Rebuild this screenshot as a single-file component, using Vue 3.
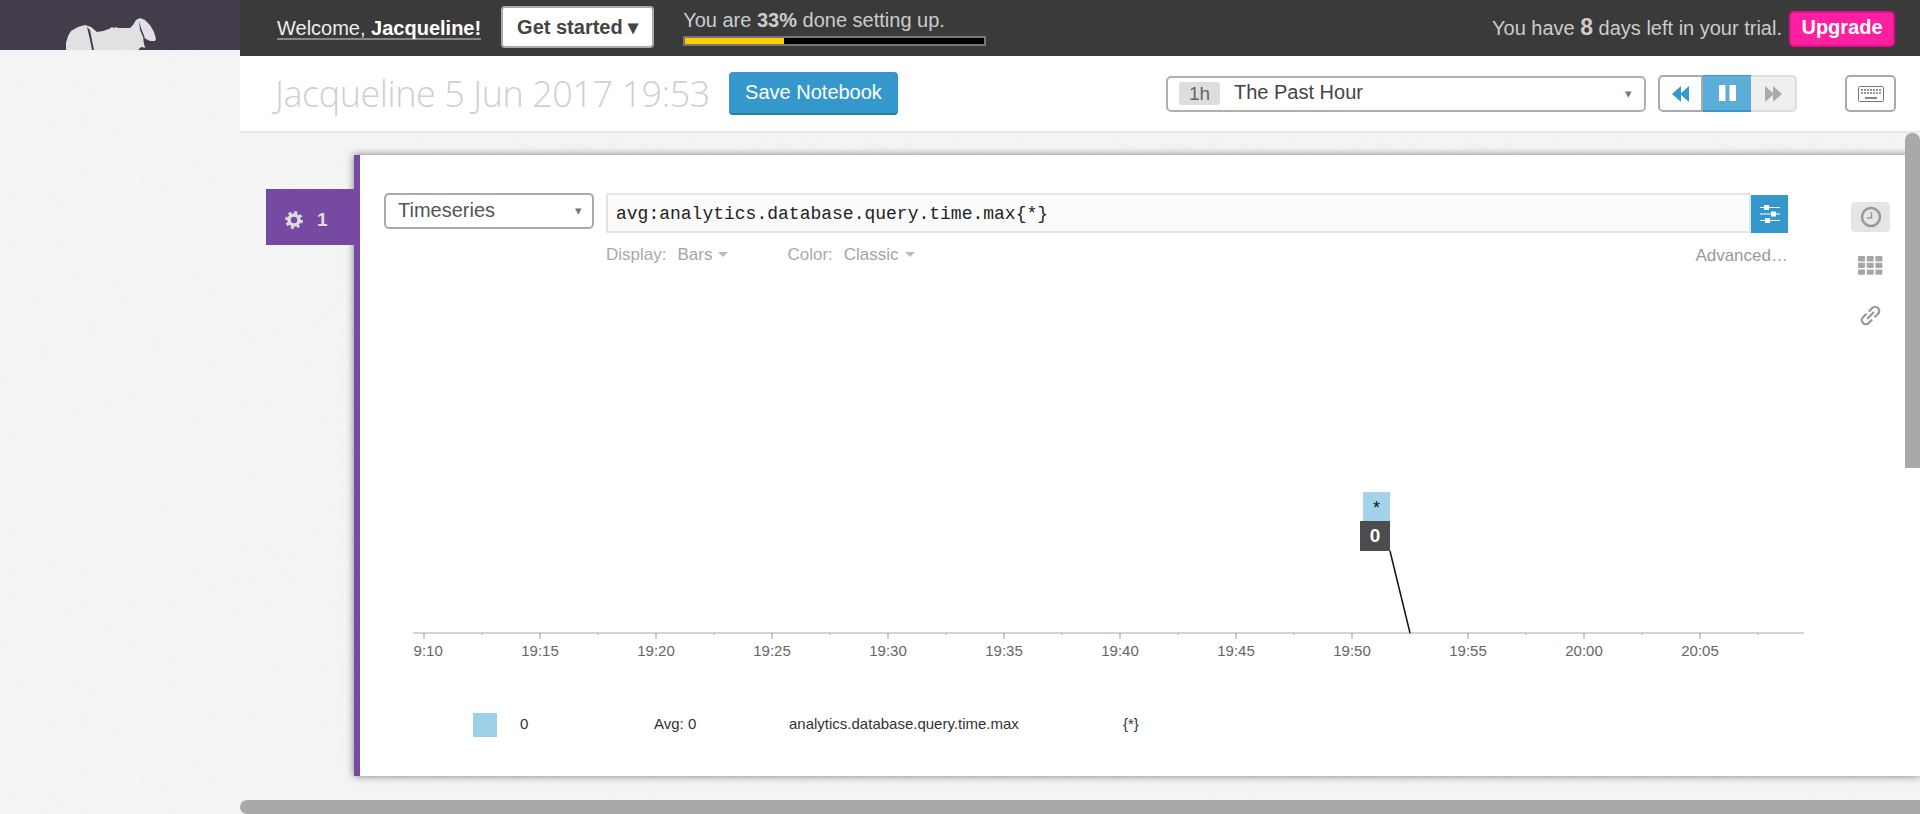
<template>
  <div class="page">
    <aside class="side">
      <div class="logo">
        <svg width="240" height="50" viewBox="0 0 240 50">
          <path fill="#e1e1e3" d="M66 50L66 43L68 36L71 31L78 27L85 25L91 27L97 32L103 31L109 29L112 27L114 28L116 27L118 28L130 28L133 25L136 20L140 18L145 20L150 25L154 32L156 39L155 41L150 41L146 39L143 37L144 44L146 50Z" />
          <path fill="#443c4a" d="M87 27L90 30L92 40L94 50L92 50L90 40Z" />
          <path fill="#443c4a" d="M139 21L141 28L145 38L143 37L140 30Z" />
          <path fill="#443c4a" d="M138 50L141 47L146 48L146 50Z" />
        </svg>
      </div>
    </aside>

    <div class="main">
      <header class="topbar">
        <a class="welcome">Welcome, <b>Jacqueline!</b></a>
        <button class="started">Get started ▾</button>
        <div class="setup">
          <div class="setup-text">You are <b>33%</b> done setting up.</div>
          <div class="progress"><div class="progress-fill" :style="{ width: done + '%' }"></div></div>
        </div>
        <div class="trial">You have <b class="days">8</b> days left in your trial.</div>
        <button class="upgrade">Upgrade</button>
      </header>

      <div class="titlebar">
        <h1 class="title">Jacqueline 5 Jun 2017 19:53</h1>
        <button class="save">Save Notebook</button>
        <div class="timepicker">
          <span class="range">1h</span>
          <span class="range-label">The Past Hour</span>
          <span class="small-caret">▾</span>
        </div>
        <div class="playback">
          <button class="play-btn back">
            <svg width="17" height="16" viewBox="0 0 17 16"><path fill="#3498cc" d="M9 0V16L0 8ZM17 0V16L8 8Z" /></svg>
          </button>
          <button class="play-btn pause">
            <svg width="17" height="16" viewBox="0 0 17 16"><path fill="#fff" d="M0 0H6.5V16H0ZM10.5 0H17V16H10.5Z" /></svg>
          </button>
          <button class="play-btn forward">
            <svg width="17" height="16" viewBox="0 0 17 16"><path fill="#aaa" d="M0 0L9 8L0 16ZM8 0L17 8L8 16Z" /></svg>
          </button>
        </div>
        <button class="keys">
          <svg width="26" height="16" viewBox="0 0 26 16">
            <rect x="0.5" y="0.5" width="25" height="15" rx="1" fill="#fff" stroke="#777" />
            <path stroke="#999" stroke-width="2" stroke-dasharray="2 1" d="M3 4H23M3 7H23" />
            <path stroke="#888" stroke-width="2" d="M7 12H19" />
          </svg>
        </button>
      </div>

      <div class="notebook">
        <div class="tab">
          <svg width="18" height="18" viewBox="0 0 18 18">
            <circle cx="9" cy="9" r="5" fill="none" stroke="#ddd" stroke-width="3.6" />
            <circle cx="9" cy="9" r="7.6" fill="none" stroke="#ddd" stroke-width="2.6" stroke-dasharray="3 2.97" />
          </svg>
          <span>1</span>
        </div>
        <section class="card">
          <div class="editor">
            <div class="type-select">
              <span>Timeseries</span>
              <span class="small-caret">▾</span>
            </div>
            <div class="query">
              <div class="query-row">
                <div class="query-input">avg:analytics.database.query.time.max{*}</div>
                <button class="tune">
                  <svg width="20" height="20" viewBox="0 0 20 20" fill="#fff">
                    <path d="M0 3H20V4H0ZM0 9.500H20V10.500H0ZM0 16H20V17H0Z" />
                    <path d="M4 1H9V6H4ZM11 7.500H16V12.500H11ZM5 14H10V19H5Z" />
                  </svg>
                </button>
              </div>
              <div class="options">
                <span class="opt-label">Display:</span>
                <span class="opt-value">Bars</span>
                <span class="opt-caret"></span>
                <span class="opt-label second">Color:</span>
                <span class="opt-value">Classic</span>
                <span class="opt-caret"></span>
                <span class="advanced">Advanced…</span>
              </div>
            </div>
            <div class="rail">
              <div class="rail-item active">
                <svg width="22" height="22" viewBox="0 0 22 22" fill="none" stroke="#999">
                  <circle cx="11" cy="11" r="9" stroke-width="2.5" />
                  <path d="M11.500 6V12H7" stroke-width="1.300" />
                </svg>
              </div>
              <div class="rail-item">
                <svg width="25" height="19" viewBox="0 0 25 19" fill="#a6a6a6">
                  <template v-for="r in 3" :key="r">
                    <rect v-for="c in 3" :key="c" :x="(c - 1) * 8.700" :y="(r - 1) * 6.700" width="7" height="5.400" rx="1" />
                  </template>
                </svg>
              </div>
              <div class="rail-item">
                <svg width="23" height="23" viewBox="0 0 20 20" fill="none" stroke="#999" stroke-width="2">
                  <path d="M8.500 6.500L11.500 3.500A3.300 3.300 0 0 1 16.500 8.500L13.500 11.500" />
                  <path d="M11.500 13.500L8.500 16.500A3.300 3.300 0 0 1 3.500 11.500L6.500 8.500" />
                  <path d="M7 13L13 7" />
                </svg>
              </div>
            </div>
          </div>

          <div class="chart">
            <svg width="1391" height="380" viewBox="413 280 1391 380">
              <path d="M413 633H1804" stroke="#aaa" stroke-width="1" />
              <path v-for="t in minorTicks" :key="t" :d="`M${t} 633v2`" stroke="#aaa" />
              <path v-for="t in ticks" :key="t.x" :d="`M${t.x} 633v6`" stroke="#999" />
              <text v-for="t in ticks" :key="t.label" :x="t.x" y="656" class="tick-label">{{ t.label }}</text>
              <path d="M1390 551L1410 633" stroke="#111" stroke-width="1.500" />
            </svg>
            <div class="chip-key">*</div>
            <div class="chip-value">0</div>
          </div>

          <div class="legend">
            <span class="swatch"></span>
            <span class="lg value">0</span>
            <span class="lg avg">Avg: 0</span>
            <span class="lg metric">analytics.database.query.time.max</span>
            <span class="lg">{*}</span>
          </div>
        </section>
      </div>
    </div>

    <div class="vscroll"></div>
    <div class="hscroll"></div>
  </div>
</template>

<script setup>
const done = 33

const labels = ['19:10', '19:15', '19:20', '19:25', '19:30', '19:35', '19:40', '19:45', '19:50', '19:55', '20:00', '20:05']
const ticks = labels.map((label, i) => ({ label, x: 424 + i * 116 }))
const minorTicks = labels.map((_, i) => 482 + i * 116)
</script>

<style>
html,
body {
  margin: 0;
  overflow: hidden;
}
</style>

<style scoped>
.page {
  position: relative;
  display: flex;
  width: 1920px;
  height: 814px;
  overflow: hidden;
  font-family: "Liberation Sans", Arial, sans-serif;
  background-color: #f7f7f7;
  background-image: url("data:image/svg+xml,%3Csvg xmlns='http://www.w3.org/2000/svg' width='300' height='300'%3E%3Cfilter id='n'%3E%3CfeTurbulence type='fractalNoise' baseFrequency='.35' numOctaves='3'/%3E%3CfeColorMatrix values='0 0 0 0 .5 0 0 0 0 .5 0 0 0 0 .5 0 0 0 .09 0'/%3E%3C/filter%3E%3Crect width='300' height='300' filter='url(%23n)'/%3E%3C/svg%3E");
}

button {
  font-family: inherit;
  padding: 0;
  cursor: pointer;
}

.side {
  width: 240px;
  flex: none;
}

.logo {
  height: 50px;
  background: #443c4a;
}

.logo svg {
  display: block;
}

.main {
  flex: 1;
  min-width: 0;
}

.topbar {
  display: flex;
  align-items: center;
  height: 56px;
  background: #3a3a3a;
  color: #ccc;
  font-size: 20px;
  box-sizing: border-box;
  padding: 0 25px 0 37px;
}

.welcome {
  color: #eee;
  border-bottom: 2px solid #888;
  line-height: 20px;
  margin-top: 1px;
}

.welcome b {
  color: #fff;
}

.started {
  width: 153px;
  height: 42px;
  margin-left: 20px;
  margin-top: -2px;
  background: #fff;
  border: 2px solid #aaa;
  border-radius: 4px;
  color: #444;
  font-size: 20px;
  font-weight: bold;
}

.setup {
  width: 303px;
  margin-left: 29px;
}

.setup-text {
  line-height: 22px;
  margin-top: -1px;
}

.progress {
  height: 6px;
  margin-top: 5px;
  background: #000;
  border: 2px solid #777;
}

.progress-fill {
  height: 100%;
  background: #fc0;
}

.trial {
  margin-left: auto;
  margin-top: -2px;
}

.days {
  font-size: 23px;
}

.upgrade {
  width: 106px;
  height: 36px;
  margin-left: 7px;
  margin-top: 2px;
  padding-bottom: 3px;
  background: #ff1fa0;
  border: 2px solid #e0108a;
  border-radius: 5px;
  color: #fff;
  font-size: 20px;
  font-weight: bold;
}

.titlebar {
  display: flex;
  align-items: center;
  height: 75px;
  background: #fff;
  border-bottom: 2px solid #e8e8e8;
  padding-left: 35px;
  padding-right: 24px;
}

.title {
  margin: 0;
  width: 454px;
  font-family: "Open Sans", sans-serif;
  font-size: 36px;
  font-weight: 300;
  color: #cfcfcf;
  white-space: nowrap;
  letter-spacing: -0.45px;
}

.save {
  width: 169px;
  height: 43px;
  background: #3498cc;
  border: 0;
  border-bottom: 2px solid #2a7aa5;
  border-radius: 4px;
  color: #fff;
  font-size: 20px;
}

.timepicker {
  display: flex;
  align-items: center;
  width: 480px;
  height: 36px;
  box-sizing: border-box;
  margin-left: 268px;
  padding: 0 12px 0 11px;
  border: 2px solid #b0b0b0;
  border-radius: 5px;
  color: #444;
  font-size: 20px;
}

.range {
  width: 41px;
  height: 23px;
  line-height: 23px;
  text-align: center;
  background: #ddd;
  border-radius: 3px;
  color: #666;
  font-size: 19px;
}

.range-label {
  margin-left: 14px;
  margin-top: -2px;
}

.small-caret {
  margin-left: auto;
  font-size: 13px;
  color: #777;
}

.playback {
  display: flex;
  height: 37px;
  margin-left: 12px;
}

.play-btn {
  display: flex;
  align-items: center;
  justify-content: center;
  box-sizing: border-box;
  height: 37px;
}

.back {
  width: 45px;
  background: #fff;
  border: 2px solid #aaa;
  border-radius: 5px 0 0 5px;
}

.pause {
  width: 48px;
  background: #5baed8;
  border: 0;
  border-bottom: 2px solid #3498cc;
  border-top: 1px solid #3498cc;
}

.forward {
  width: 46px;
  background: #efefef;
  border: 2px solid #ddd;
  border-left: 0;
  border-radius: 0 5px 5px 0;
}

.keys {
  display: flex;
  align-items: center;
  justify-content: center;
  width: 51px;
  height: 37px;
  margin-left: 48px;
  background: #fff;
  border: 2px solid #aaa;
  border-radius: 5px;
}

.notebook {
  display: flex;
  align-items: flex-start;
  padding: 22px 0 0 26px;
}

.tab {
  position: relative;
  z-index: 1;
  display: flex;
  align-items: center;
  gap: 14px;
  width: 88px;
  height: 56px;
  box-sizing: border-box;
  margin-top: 34px;
  padding: 5px 0 0 19px;
  background: #7649a3;
  color: #ddd;
  font-size: 19px;
  font-weight: bold;
}

.card {
  flex: 1;
  height: 621px;
  box-sizing: border-box;
  background: #fff;
  border-left: 6px solid #7649a3;
  box-shadow: 0 0 8px rgba(0, 0, 0, 0.5);
}

.editor {
  display: flex;
  align-items: flex-start;
  height: 125px;
  box-sizing: border-box;
  padding: 38px 0 0 24px;
}

.type-select {
  display: flex;
  align-items: center;
  width: 210px;
  height: 36px;
  box-sizing: border-box;
  padding: 0 10px 2px 12px;
  border: 2px solid #aaa;
  border-radius: 5px;
  color: #555;
  font-size: 20px;
}

.query {
  width: 1182px;
  margin-left: 12px;
}

.query-row {
  display: flex;
  align-items: flex-end;
}

.query-input {
  flex: 1;
  height: 40px;
  line-height: 38px;
  box-sizing: border-box;
  padding-left: 8px;
  background: #fbfbfb;
  border: 2px solid #e4e4e4;
  color: #222;
  font-family: "Liberation Mono", monospace;
  font-size: 18px;
}

.tune {
  display: flex;
  align-items: center;
  justify-content: center;
  width: 37px;
  height: 38px;
  background: #3498cc;
  border: 0;
}

.options {
  display: flex;
  align-items: center;
  margin-top: 10px;
  font-size: 17px;
  color: #aaa;
}

.opt-value {
  margin-left: 11px;
  color: #a5a5a5;
}

.opt-caret {
  width: 0;
  height: 0;
  margin-left: 6px;
  border: 5px solid transparent;
  border-top: 5px solid #bbb;
  border-bottom: 0;
}

.second {
  margin-left: 59px;
}

.advanced {
  margin-left: auto;
  margin-top: 3px;
  color: #999;
}

.rail {
  width: 39px;
  margin-left: 63px;
  margin-top: 9px;
}

.rail-item {
  display: flex;
  align-items: center;
  justify-content: center;
  height: 30px;
  margin-bottom: 20px;
  border-radius: 4px;
}

.rail-item.active {
  background: #e5e5e5;
  padding-bottom: 0;
  margin-bottom: 18px;
}

.chart {
  position: relative;
  width: 1391px;
  height: 380px;
  margin-left: 53px;
}

.chart svg {
  display: block;
}

.tick-label {
  font-size: 15px;
  fill: #666;
  text-anchor: middle;
}

.chip-key {
  position: absolute;
  left: 950px;
  top: 212px;
  width: 27px;
  height: 30px;
  line-height: 32px;
  text-align: center;
  background: #a3d3ea;
  color: #111;
  font-size: 18px;
}

.chip-value {
  position: absolute;
  left: 947px;
  top: 241px;
  width: 30px;
  height: 30px;
  line-height: 30px;
  text-align: center;
  background: #4d4d4d;
  color: #fff;
  font-size: 19px;
  font-weight: bold;
}

.legend {
  display: flex;
  align-items: center;
  height: 30px;
  margin-top: 50px;
  margin-left: 113px;
  font-size: 15px;
  color: #333;
}

.swatch {
  width: 24px;
  height: 24px;
  background: #9dcfe8;
}

.lg {
  display: block;
  margin-bottom: 4px;
}

.value {
  width: 134px;
  margin-left: 23px;
}

.avg {
  width: 135px;
}

.metric {
  width: 334px;
}

.vscroll {
  position: absolute;
  right: 0;
  top: 133px;
  width: 15px;
  height: 335px;
  background: #a9a9a9;
  border-radius: 7px 7px 0 0;
}

.hscroll {
  position: absolute;
  left: 240px;
  right: 0;
  bottom: 0;
  height: 14px;
  background: #a9a9a9;
  border-radius: 7px 0 0 7px;
}
</style>
